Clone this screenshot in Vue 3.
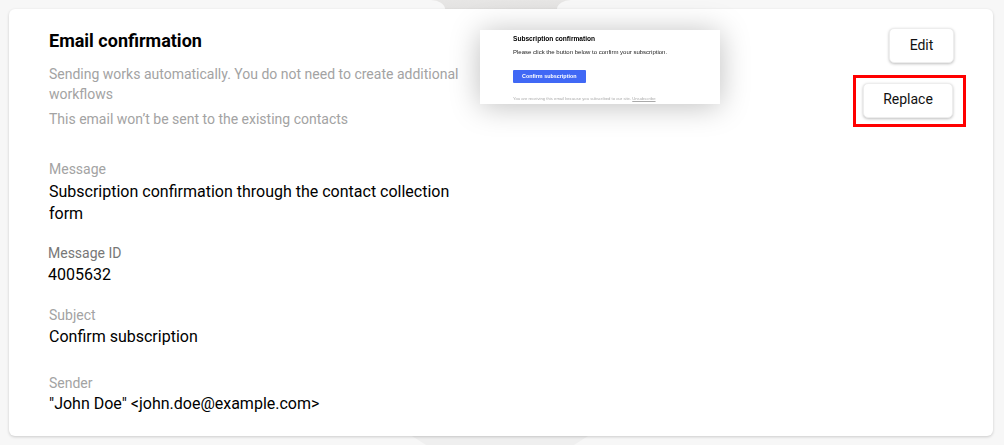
<template>
    <div class="page">
        <div class="backdrop">
            <span class="panel panel-left"></span>
            <span class="panel panel-right"></span>
            <span class="blob-bottom"></span>
        </div>

        <section class="card">
            <div class="info">
                <h2 class="title">Email confirmation</h2>
                <p class="hint hint-first">Sending works automatically. You do not need to create additional workflows</p>
                <p class="hint hint-second">This email won’t be sent to the existing contacts</p>

                <div v-for="field in fields" :key="field.label" class="field" :class="field.cls">
                    <div class="field-label">{{ field.label }}</div>
                    <div class="field-value">{{ field.value }}</div>
                </div>
            </div>

            <div class="preview">
                <div class="preview-inner">
                    <div class="preview-title">Subscription confirmation</div>
                    <div class="preview-text">Please click the button below to confirm your subscription.</div>
                    <div class="preview-btn">Confirm subscription</div>
                    <div class="preview-foot">You are receiving this email because you subscribed to our site. <u>Unsubscribe</u></div>
                </div>
            </div>

            <div class="actions">
                <button class="btn btn-edit">Edit</button>
                <div class="highlight">
                    <button class="btn btn-replace">Replace</button>
                </div>
            </div>
        </section>
    </div>
</template>

<script setup>
const fields = [
    { label: 'Message', value: 'Subscription confirmation through the contact collection form', cls: 'f-message' },
    { label: 'Message ID', value: '4005632', cls: 'f-id' },
    { label: 'Subject', value: 'Confirm subscription', cls: 'f-subject' },
    { label: 'Sender', value: '"John Doe" <john.doe@example.com>', cls: 'f-sender' }
];
</script>

<style>
html, body {
    margin: 0;
    background: #f7f7f7;
    overflow: hidden;
}
</style>

<style scoped>
.page {
    position: relative;
    box-sizing: border-box;
    width: 1004px;
    height: 445px;
    padding: 9px 11px 9px 9px;
    font-family: Roboto, sans-serif;
    background: #f7f7f7;
}

/* Grey shapes that peek out behind the card */
.backdrop {
    position: absolute;
    inset: 0;
    overflow: hidden;
    background: linear-gradient(#e7e6e5 0, #e3e2e1 9px, #f7f7f7 9px);
}

.panel {
    position: absolute;
    top: 0;
    height: 9px;
    background: #f7f7f7;
}

.panel-left {
    left: 0;
    width: 445px;
    border-top-right-radius: 14px 9px;
}

.panel-right {
    left: 557px;
    right: 0;
    border-top-left-radius: 14px 9px;
}

.blob-bottom {
    position: absolute;
    top: 436px;
    left: 412px;
    width: 176px;
    height: 9px;
    background: #efefef;
    clip-path: polygon(0 0, 100% 0, 92% 100%, 8% 100%);
}

.card {
    position: relative;
    display: flex;
    box-sizing: border-box;
    height: 427px;
    padding: 0 0 0 40px;
    background: #fff;
    border-radius: 6px;
    box-shadow: 0 1px 3px rgba(0, 0, 0, 0.18);
}

.info {
    width: 416px;
    flex: none;
}

.title {
    margin: 21px 0 0;
    font-size: 18px;
    line-height: 22px;
    font-weight: 700;
    color: #000;
}

.hint {
    margin: 0;
    font-size: 14px;
    line-height: 20px;
    color: #a3a3a3;
}

.hint-first {
    margin-top: 12px;
}

.hint-second {
    margin-top: 5px;
}

.field-label {
    font-size: 14px;
    line-height: 20px;
    color: #a3a3a3;
}

.field-value {
    font-size: 16px;
    line-height: 22px;
    color: #000;
}

.f-message {
    margin-top: 30px;
}

.f-message .field-value {
    margin-top: 2px;
}

.f-id {
    margin-top: 18px;
    margin-left: -1px;
}

.f-id .field-label {
    color: #777;
}

.f-id .field-value,
.f-subject .field-value {
    margin-top: 1px;
}

.f-subject {
    margin-top: 19px;
}

.f-sender {
    margin-top: 25px;
}

.preview {
    flex: none;
    box-sizing: border-box;
    width: 240px;
    height: 74px;
    margin: 21px 0 0 15px;
    background: #fff;
    box-shadow: 0 2px 30px rgba(0, 0, 0, 0.26);
    font-family: "Liberation Sans", Arial, sans-serif;
    color: #222;
}

.preview-inner {
    padding: 4px 0 0 33px;
    filter: blur(0.3px);
}

.preview-title {
    font-size: 6.6px;
    line-height: 9px;
    font-weight: 700;
    color: #000;
}

.preview-text {
    margin-top: 5px;
    font-size: 6px;
    line-height: 9px;
    color: #222;
}

.preview-btn {
    box-sizing: border-box;
    width: 73px;
    height: 13px;
    margin-top: 13px;
    padding-left: 9px;
    background: #4068f5;
    color: #fff;
    font-size: 5.4px;
    font-weight: 700;
    line-height: 13px;
    border-radius: 1px;
}

.preview-foot {
    margin-top: 13px;
    font-size: 4.2px;
    line-height: 6px;
    color: #aaa;
    white-space: nowrap;
}

.actions {
    flex: 1;
    display: flex;
    flex-direction: column;
    align-items: flex-end;
    padding: 19px 39px 0 0;
}

.btn {
    display: block;
    box-sizing: border-box;
    height: 35px;
    padding: 0;
    background: #fff;
    border: 1px solid #ededed;
    border-radius: 5px;
    box-shadow: 0 1px 3px rgba(0, 0, 0, 0.26);
    font-family: Roboto, sans-serif;
    font-size: 14px;
    color: #111;
}

.btn-edit {
    width: 65px;
    padding-bottom: 2px;
}

.highlight {
    box-sizing: border-box;
    width: 113px;
    height: 52px;
    margin: 12px -12px 0 0;
    padding: 5px 10px 0 7px;
    border: 3px solid #f00;
}

.btn-replace {
    width: 90px;
    padding-bottom: 3px;
}
</style>
